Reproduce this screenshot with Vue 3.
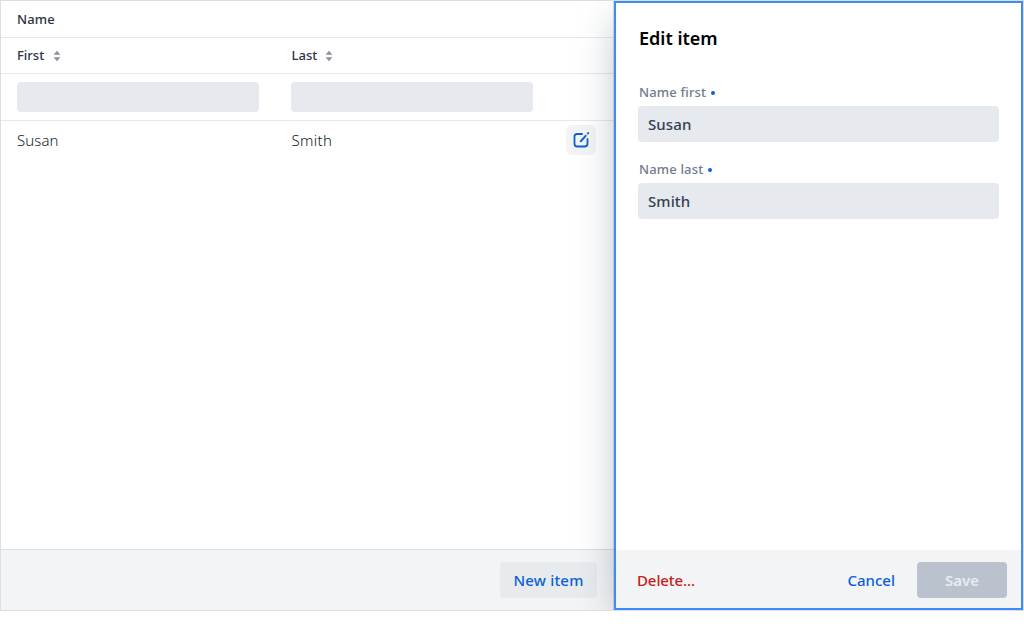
<script setup>
const columns = ['First', 'Last']
const fields = [
  { label: 'Name first', value: 'Susan' },
  { label: 'Name last', value: 'Smith' },
]
</script>

<template>
  <main class="crud">
    <section class="list">
      <div class="row group"><span class="th name">Name</span></div>
      <div class="row cols">
        <div v-for="c in columns" :key="c" class="cell">
          <span class="th" :class="c.toLowerCase()">{{ c }}</span>
          <svg class="sorter" width="8" height="12" viewBox="0 0 8 12">
            <path d="M4 .8 7.500 4.800H.5zM4 11.200 7.500 7.200H.5z" />
          </svg>
        </div>
      </div>
      <div class="row filters">
        <div v-for="c in columns" :key="c" class="cell"><div class="filter"></div></div>
      </div>
      <div class="row data">
        <div class="cell">Susan</div>
        <div class="cell smith">Smith</div>
        <button class="edit" aria-label="Edit">
          <svg width="18" height="18" viewBox="0 0 18 18" fill="none">
            <path d="M10 3H5Q2.500 3 2.500 5.500V12.500Q2.500 15.500 5 15.500H12.500Q15.500 15.500 15.500 12.500V8" stroke-width="1.800" stroke-linecap="round" />
            <path d="M8.700 10.300 13.600 4.800" stroke-width="2" stroke-linecap="round" />
            <path d="M15.800 2.500 16.200 2" stroke-width="2" stroke-linecap="round" />
          </svg>
        </button>
      </div>
      <div class="space"></div>
      <footer class="bar list-bar"><button class="btn new"><span>New item</span></button></footer>
    </section>
    <aside class="editor">
      <div class="form">
        <h3>Edit item</h3>
        <div v-for="f in fields" :key="f.label" class="field">
          <label><span>{{ f.label }}</span><i></i></label>
          <div class="input"><span>{{ f.value }}</span></div>
        </div>
      </div>
      <footer class="bar editor-bar">
        <button class="btn delete"><span>Delete...</span></button>
        <button class="btn cancel"><span>Cancel</span></button>
        <button class="btn save"><span>Save</span></button>
      </footer>
    </aside>
  </main>
</template>

<style>
body { background: #fff; overflow: hidden; }
</style>

<style scoped>
* { box-sizing: border-box; }
.crud {
  display: flex;
  width: 1024px;
  height: 611px;
  border: 1px solid #d9dfe5;
  font-family: "Noto Sans", "Open Sans", sans-serif;
  color: #2a3442;
}
.list { width: 613px; display: flex; flex-direction: column; }
.row { display: flex; border-bottom: 1px solid #e6e8eb; flex: none; }
.group { height: 37px; padding-left: 16px; align-items: center; }
.cols { height: 36px; }
.filters { height: 47px; }
.data { height: 40px; border: 0; font-size: 15px; font-weight: 300; color: #121b28; }
.data .cell { padding-bottom: 2px; letter-spacing: .1px; }
.data .smith { letter-spacing: .3px; padding-left: 16.500px; }
.cell { width: 274px; padding-left: 16px; display: flex; align-items: center; flex: none; }
.th { font-size: 13px; font-weight: 500; line-height: 18px; }
.name { letter-spacing: .15px; }
.cols .th { padding-bottom: 2px; }
.sorter { margin: 1px 0 0 8.500px; fill: #8b929e; }
.last + .sorter { margin-left: 8px; }
.last { margin-left: .5px; }
.filter { width: 242px; height: 30px; border-radius: 4px; background: #e6e9ed; }
button { border: 0; padding: 0; font-family: inherit; cursor: pointer; }
.edit {
  width: 30px; height: 30px; margin: 4px 0 0 17px;
  border-radius: 6px; background: #f3f4f6;
  display: flex; align-items: center; justify-content: center;
}
.edit path { stroke: #0b61d6; }
.space { flex: 1; }
.bar { display: flex; align-items: center; background: #f3f4f6; flex: none; }
.list-bar { height: 61px; border-top: 1px solid #d9dfe5; justify-content: flex-end; padding-right: 17px; }
.btn { height: 36px; border-radius: 4px; font-size: 15px; font-weight: 500; color: #0b61d6; background: none; white-space: nowrap; }
.new { width: 97px; background: #e8ebee; letter-spacing: .2px; }
.editor {
  width: 409px; height: 609px; position: relative; flex: none;
  display: flex; flex-direction: column;
  background: #fff; border: 2px solid #3c8df9;
  box-shadow: 0 0 0 1px rgba(130, 145, 165, .3), 0 12px 40px -8px rgba(33, 51, 77, .4);
  clip-path: inset(0 0 0 -60px);
}
.form { flex: 1; padding: 22px 22px 0; }
h3 { height: 26px; margin: 0 0 31px 1px; font-size: 18px; line-height: 26px; font-weight: 600; color: #000; }
.field { height: 77px; }
label { display: flex; align-items: center; height: 20px; margin-left: 1px; font-size: 13px; font-weight: 500; letter-spacing: .15px; color: #707b8b; }
label i { width: 4px; height: 4px; margin: 1px 0 0 5px; border-radius: 50%; background: #0b61d6; }
.input { height: 36px; margin-top: 4px; padding-left: 10px; border-radius: 4px; background: #e6e9ed; display: flex; align-items: center; font-size: 15px; font-weight: 500; letter-spacing: .1px; color: #334052; }
.editor-bar { height: 58px; padding: 1px 14px 0 21px; }
.delete { color: #c5221b; letter-spacing: -.1px; }
.cancel { margin-left: auto; margin-right: 22px; }
.save { width: 90px; background: #bac3cd; color: #e9ecf0; font-weight: 600; }
</style>
